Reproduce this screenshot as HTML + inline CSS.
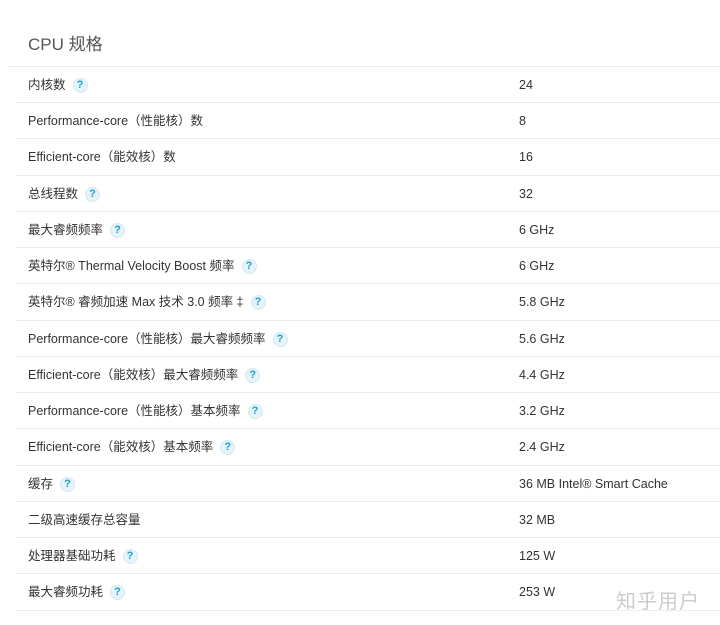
<!DOCTYPE html>
<html><head><meta charset="utf-8"><style>
body{margin:0;width:720px;height:625px;background:#fff;font-family:"Liberation Sans","Noto Sans CJK SC",sans-serif;color:#333;overflow:hidden;position:relative}
.t{position:absolute;left:28px;top:30px;font-size:17px;color:#555}
.r{position:absolute;left:15px;right:0;height:36px;border-top:1px solid #eee;font-size:12.5px}
.r .l{position:absolute;left:13px;top:10px;white-space:nowrap;line-height:16px;height:16px}
.r .v{position:absolute;left:504px;top:10px;line-height:16px}
.q{display:inline-block;width:15px;height:15px;border-radius:50%;background:#e6f3f8;border:1px solid #d3e9f1;color:#1aa3d1;font-weight:bold;font-size:11px;text-align:center;margin-left:7px;vertical-align:top;position:relative;top:1px;box-sizing:border-box;line-height:13px}
.wm{position:absolute;left:616px;top:585px;font-size:20px;color:#ccc;letter-spacing:1px}
</style></head><body>
<div class="t">CPU 规格</div>
<div class="r" style="top:66px;left:8px"><span class="l" style="left:20px">内核数<span class="q">?</span></span><span class="v" style="left:511px">24</span></div>
<div class="r" style="top:102px"><span class="l">Performance-core（性能核）数</span><span class="v">8</span></div>
<div class="r" style="top:138px"><span class="l">Efficient-core（能效核）数</span><span class="v">16</span></div>
<div class="r" style="top:175px"><span class="l">总线程数<span class="q">?</span></span><span class="v">32</span></div>
<div class="r" style="top:211px"><span class="l">最大睿频频率<span class="q">?</span></span><span class="v">6 GHz</span></div>
<div class="r" style="top:247px"><span class="l">英特尔® Thermal Velocity Boost 频率<span class="q">?</span></span><span class="v">6 GHz</span></div>
<div class="r" style="top:283px"><span class="l">英特尔® 睿频加速 Max 技术 3.0 频率 ‡<span class="q">?</span></span><span class="v">5.8 GHz</span></div>
<div class="r" style="top:320px"><span class="l">Performance-core（性能核）最大睿频频率<span class="q">?</span></span><span class="v">5.6 GHz</span></div>
<div class="r" style="top:356px"><span class="l">Efficient-core（能效核）最大睿频频率<span class="q">?</span></span><span class="v">4.4 GHz</span></div>
<div class="r" style="top:392px"><span class="l">Performance-core（性能核）基本频率<span class="q">?</span></span><span class="v">3.2 GHz</span></div>
<div class="r" style="top:428px"><span class="l">Efficient-core（能效核）基本频率<span class="q">?</span></span><span class="v">2.4 GHz</span></div>
<div class="r" style="top:465px"><span class="l">缓存<span class="q">?</span></span><span class="v">36 MB Intel® Smart Cache</span></div>
<div class="r" style="top:501px"><span class="l">二级高速缓存总容量</span><span class="v">32 MB</span></div>
<div class="r" style="top:537px"><span class="l">处理器基础功耗<span class="q">?</span></span><span class="v">125 W</span></div>
<div class="r" style="top:573px;border-bottom:1px solid #eee"><span class="l">最大睿频功耗<span class="q">?</span></span><span class="v">253 W</span></div>
<div class="wm">知乎用户</div>
</body></html>
